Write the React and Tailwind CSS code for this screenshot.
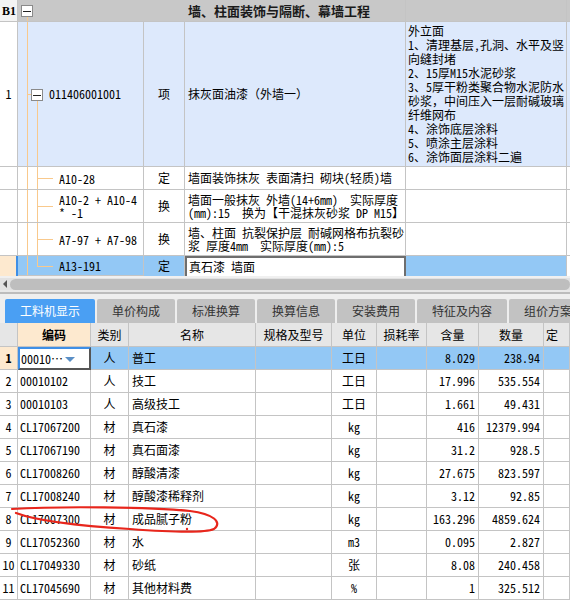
import React from "react";

const FONT = {
  fontFamily:
    "'Noto Sans Mono CJK SC', 'Noto Sans CJK SC', 'Liberation Mono', monospace",
};

const ROWS = [
  ["00010101", "人", "普工", "工日", "8.029", "238.94"],
  ["00010102", "人", "技工", "工日", "17.996", "535.554"],
  ["00010103", "人", "高级技工", "工日", "1.661", "49.431"],
  ["CL17067200", "材", "真石漆", "kg", "416", "12379.994"],
  ["CL17067190", "材", "真石面漆", "kg", "31.2", "928.5"],
  ["CL17008260", "材", "醇酸清漆", "kg", "27.675", "823.597"],
  ["CL17008240", "材", "醇酸漆稀释剂", "kg", "3.12", "92.85"],
  ["CL17007300", "材", "成品腻子粉", "kg", "163.296", "4859.624"],
  ["CL17052360", "材", "水", "m3", "0.095", "2.827"],
  ["CL17049330", "材", "砂纸", "张", "8.08", "240.458"],
  ["CL17045690", "材", "其他材料费", "%", "1", "325.512"],
];

const TABS = [
  { label: "工料机显示", w: "w-[90px]" },
  { label: "单价构成", w: "w-[78px]" },
  { label: "标准换算", w: "w-[78px]" },
  { label: "换算信息", w: "w-[78px]" },
  { label: "安装费用", w: "w-[78px]" },
  { label: "特征及内容", w: "w-[90px]" },
  { label: "组价方案", w: "w-[78px]" },
];

const FEATURES = [
  "外立面",
  "1、清理基层,孔洞、水平及竖",
  "向缝封堵",
  "2、15厚M15水泥砂浆",
  "3、5厚干粉类聚合物水泥防水",
  "砂浆，中间压入一层耐碱玻璃",
  "纤维网布",
  "4、涂饰底层涂料",
  "5、喷涂主层涂料",
  "6、涂饰面层涂料二遍",
];

function Box() {
  return (
    <div className="w-[12px] h-[12px] border border-[#8a8a8a] bg-white flex items-center justify-center">
      <div className="w-[8px] h-px bg-[#222]" />
    </div>
  );
}

// tree cell of the upper grid
function TreeCell({ kind, children, bg = "bg-white", h }) {
  return (
    <div className={`relative border-r border-b border-[#c4c4c4] ${bg} ${h}`}>
      <div className="absolute left-[9px] top-0 bottom-0 w-px bg-[#f9c98c]" />
      {kind === "root" && (
        <>
          <div className="absolute left-[9px] top-1/2 w-[4px] h-px bg-[#f9c98c]" />
          <div className="absolute left-[19px] top-[79px] bottom-0 w-px bg-[#f9c98c]" />
          <div className="absolute left-[13px] top-[67px]">
            <Box />
          </div>
          <div className="absolute left-[31px] top-0 bottom-0 flex items-center">
            {children}
          </div>
        </>
      )}
      {(kind === "leaf" || kind === "last") && (
        <>
          <div
            className={`absolute left-[19px] top-0 w-px bg-[#f9c98c] ${
              kind === "last" ? "h-1/2" : "bottom-0"
            }`}
          />
          <div className="absolute left-[19px] top-1/2 w-[16px] h-px bg-[#f9c98c]" />
          <div className="absolute left-[41px] right-0 top-0 bottom-0 flex items-center leading-[13px]">
            {children}
          </div>
        </>
      )}
    </div>
  );
}

function TopGrid() {
  const cell = "border-r border-b border-[#c4c4c4]";
  return (
    <div className="grid grid-cols-[18px_126px_41px_221px_161px_3px] text-[12px] text-black">
      {/* header */}
      <div className={`${cell} h-[22px] bg-[#f3f3f3] flex items-center pl-[2px] font-bold text-[12px]`} style={{ fontFamily: "'Liberation Serif', serif" }}>
        B1
      </div>
      <div className="col-span-3 relative h-[22px] bg-[#c8c8c8] border-b border-r border-[#c4c4c4]">
        <div className="absolute left-[3px] top-[5px]">
          <Box />
        </div>
        <div className="absolute left-[9px] top-[17px] bottom-0 w-px bg-[#f9c98c]" />
        <div className="absolute left-[170px] top-0 bottom-0 flex items-center font-bold text-[13px] text-[#1a1a1a]">
          墙、柱面装饰与隔断、幕墙工程
        </div>
      </div>
      <div className={`${cell} bg-[#c8c8c8]`} />
      <div className="border-b border-[#c4c4c4] bg-[#c8c8c8]" />

      {/* row 1 */}
      <div className={`${cell} h-[145px] bg-white flex items-center justify-center`}>1</div>
      <TreeCell kind="root" bg="bg-[#dde9fc]" h="h-[145px]">
        011406001001
      </TreeCell>
      <div className={`${cell} bg-[#dde9fc] flex items-center justify-center`}>项</div>
      <div className={`${cell} bg-[#dde9fc] flex items-center pl-[3px]`}>
        抹灰面油漆（外墙一）
      </div>
      <div className={`${cell} bg-[#dde9fc] flex flex-col justify-center pl-[2px] leading-[14px] whitespace-nowrap`}>
        {FEATURES.map((f) => (
          <div key={f}>{f}</div>
        ))}
      </div>
      <div className="border-b border-[#c4c4c4] bg-[#dde9fc]" />

      {/* row 2 */}
      <div className={`${cell} bg-white h-[23px]`} />
      <TreeCell kind="leaf" h="h-[23px]">A10-28</TreeCell>
      <div className={`${cell} bg-white flex items-center justify-center`}>定</div>
      <div className={`${cell} bg-white flex items-center pl-[3px] whitespace-nowrap`}>
        墙面装饰抹灰 表面清扫 砌块(轻质)墙
      </div>
      <div className={`${cell} bg-white`} />
      <div className="border-b border-[#c4c4c4] bg-white" />

      {/* row 3 */}
      <div className={`${cell} bg-white h-[33px]`} />
      <TreeCell kind="leaf" h="h-[33px]">
        <div>
          A10-2 + A10-4
          <br />* -1
        </div>
      </TreeCell>
      <div className={`${cell} bg-white flex items-center justify-center`}>换</div>
      <div className={`${cell} bg-white flex flex-col justify-center pl-[3px] leading-[13px] whitespace-pre`}>
        <div>墙面一般抹灰 外墙(14+6mm)  实际厚度</div>
        <div>(mm):15  换为【干混抹灰砂浆 DP M15】</div>
      </div>
      <div className={`${cell} bg-white`} />
      <div className="border-b border-[#c4c4c4] bg-white" />

      {/* row 4 */}
      <div className={`${cell} bg-white h-[33px]`} />
      <TreeCell kind="leaf" h="h-[33px]">A7-97 + A7-98</TreeCell>
      <div className={`${cell} bg-white flex items-center justify-center`}>换</div>
      <div className={`${cell} bg-white flex flex-col justify-center pl-[3px] leading-[13px] whitespace-pre`}>
        <div>墙、柱面 抗裂保护层 耐碱网格布抗裂砂</div>
        <div>浆 厚度4mm  实际厚度(mm):5</div>
      </div>
      <div className={`${cell} bg-white`} />
      <div className="border-b border-[#c4c4c4] bg-white" />

      {/* row 5 (selected) */}
      <div className="h-[20px] bg-[#fde9cf] border-r-2 border-[#3f8fe6]" />
      <TreeCell kind="last" bg="bg-[#93c8f5]" h="h-[20px]">A13-191</TreeCell>
      <div className="border-r border-[#c4c4c4] bg-[#93c8f5] flex items-center justify-center">定</div>
      <div className="bg-white border-l-2 border-t-2 border-r-2 border-[#6e6e6e] flex items-center pl-[2px]">
        真石漆 墙面
      </div>
      <div className="bg-[#93c8f5] border-r border-[#c4c4c4]" />
      <div className="bg-white" />
    </div>
  );
}

function ScrollBar() {
  return (
    <div>
      <div className="h-[2px] bg-[#f0f0f0]" />
      <div className="h-[12px] bg-[#e2e2e2] flex items-center">
        <div className="w-[10px] flex justify-center">
          <div className="w-0 h-0 border-y-[4px] border-y-transparent border-r-[4px] border-r-[#555]" />
        </div>
        <div className="flex-1 h-[11px] rounded-full bg-[#bebebe]" />
      </div>
      <div className="h-[2px] bg-[#e8e8e8]" />
      <div className="h-[2px] bg-[#bcbcbc]" />
      <div className="h-[5px] bg-[#eeeeee]" />
    </div>
  );
}

function Tabs() {
  return (
    <div className="flex h-[24px] bg-[#eeeeee] pl-[5px] gap-[2px] overflow-hidden">
      {TABS.map((t, i) => (
        <div
          key={t.label}
          className={`${t.w} shrink-0 rounded-t-[2px] flex items-center justify-center text-[12px] ${
            i === 0 ? "bg-[#4a9ff3] text-white" : "bg-[#c2c2c2] text-[#333]"
          }`}
          style={{ fontFamily: "'Noto Sans CJK SC', sans-serif" }}
        >
          {t.label}
        </div>
      ))}
    </div>
  );
}

function BottomGrid() {
  const head = "h-[24px] border-r border-b border-[#c4c4c4] bg-[#e6e6e6] flex items-center justify-center";
  const c = "h-[23px] border-r border-b border-[#c4c4c4] flex items-center";
  return (
    <div className="grid grid-cols-[18px_73px_38px_127px_76px_45px_50px_52px_65px_26px] text-[12px] text-black">
      <div className={head} />
      <div className={`${head} !bg-[#fde9cf] font-bold`}>编码</div>
      <div className={head}>类别</div>
      <div className={head}>名称</div>
      <div className={head}>规格及型号</div>
      <div className={head}>单位</div>
      <div className={head}>损耗率</div>
      <div className={head}>含量</div>
      <div className={head}>数量</div>
      <div className={`${head} justify-start pl-[2px]`}>定</div>

      {ROWS.map((r, i) => {
        const sel = i === 0;
        const bg = sel ? "bg-[#93c8f5]" : "bg-white";
        return (
          <React.Fragment key={r[0]}>
            <div className={`${c} justify-center ${sel ? "bg-[#fde9cf] font-bold" : "bg-white"}`}>
              {i + 1}
            </div>
            {sel ? (
              <div className="h-[23px] bg-white border-t-2 border-l-2 border-[#3f8fe6] border-r-2 border-r-[#555] border-b-2 border-b-[#555] flex items-center pl-[1px] relative">
                00010…
                <div className="absolute right-[14px] top-[8px] w-0 h-0 border-x-[5px] border-x-transparent border-t-[5px] border-t-[#5a8fc6]" />
              </div>
            ) : (
              <div className={`${c} bg-white pl-[2px]`}>{r[0]}</div>
            )}
            <div className={`${c} ${bg} justify-center`}>{r[1]}</div>
            <div className={`${c} ${bg} pl-[3px]`}>{r[2]}</div>
            <div className={`${c} ${bg}`} />
            <div className={`${c} ${bg} justify-center`}>{r[3]}</div>
            <div className={`${c} ${bg}`} />
            <div className={`${c} ${bg} justify-end pr-[3px]`}>{r[4]}</div>
            <div className={`${c} ${bg} justify-end pr-[3px]`}>{r[5]}</div>
            <div className={`${c} ${bg}`} />
          </React.Fragment>
        );
      })}
    </div>
  );
}

export default function App() {
  return (
    <div className="relative w-[570px] h-[613px] bg-white overflow-hidden" style={FONT}>
      <TopGrid />
      <ScrollBar />
      <Tabs />
      <BottomGrid />
      {/* red hand-drawn mark */}
      <svg className="absolute inset-0 pointer-events-none" width="570" height="613">
        <path
          d="M12 509 C 60 506, 150 507, 190 511 C 213 514, 223 522, 214 529 C 205 533, 170 532, 130 529 C 80 526, 40 522, 16 513"
          fill="none"
          stroke="#e8261c"
          strokeWidth="2.2"
          strokeLinecap="round"
        />
        <circle cx="187" cy="529" r="1.2" fill="#e8261c" />
      </svg>
    </div>
  );
}
